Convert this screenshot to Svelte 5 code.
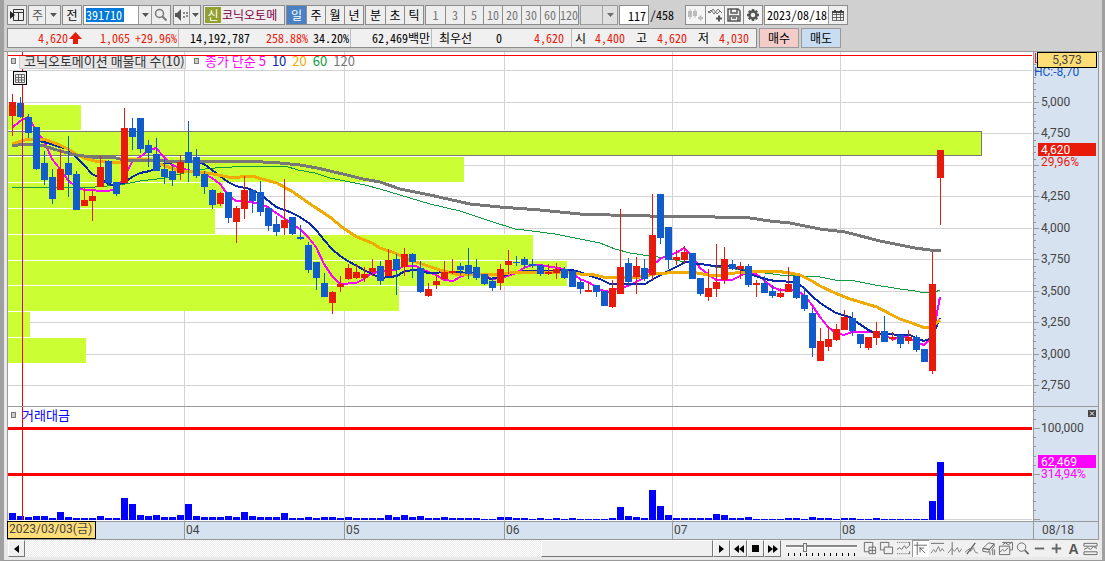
<script>
	// one row per day: direction, high, body top, body bottom, low
	const candles = `r 94 102 116 136,b 97 103 117 118,b 114 117 133 138,b 127 127 169 170,b 151 163 180 185,b 169 177 199 204,
r 149 169 190 190,b 136 163 175 197,b 171 174 210 210,r 188 200 206 206,r 189 196 201 221,r 156 167 187 187,b 160 161 183 185,
b 182 182 194 196,r 108 128 183 183,b 118 128 137 150,b 118 118 149 153,b 140 145 153 167,b 138 154 171 171,b 159 169 177 184,
b 165 171 180 186,r 155 162 173 180,b 121 152 163 182,b 149 157 176 178,b 171 174 187 194,b 189 190 205 209,r 192 193 204 206,
b 192 192 218 223,r 206 208 222 243,r 176 190 209 219,b 190 190 201 213,b 181 192 212 216,b 206 208 226 231,b 216 224 232 236,
r 179 220 228 235,b 217 217 234 235,b 225 237 239 240,b 242 245 270 273,b 262 262 278 290,b 273 283 297 297,r 291 292 303 314,
r 276 284 287 292,r 264 268 279 280,r 264 272 278 279,r 267 274 278 282,r 259 268 272 276,b 261 266 281 285,r 249 260 276 276,
b 254 259 270 295,r 248 254 267 276,b 253 254 262 278,b 261 268 292 293,r 283 289 296 297,r 275 281 285 289,r 261 272 279 280,
r 259 271 273 274,b 263 266 270 275,b 248 265 274 279,b 259 267 278 280,b 274 274 284 285,b 278 281 288 291,r 264 269 283 290,
r 250 261 265 274,b 256 262 263 266,b 257 259 265 269,b 259 264 266 268,b 265 265 274 276,r 264 272 274 275,r 263 269 273 279,
b 267 269 278 279,b 271 271 287 287,b 280 282 289 294,r 282 290 292 292,b 285 285 292 297,b 291 291 306 306,r 280 288 307 308,
r 209 267 294 294,b 258 263 282 286,r 257 266 277 294,b 259 268 279 281,r 194 235 275 280,b 194 194 238 244,b 227 227 260 269,
r 250 257 260 265,r 246 252 260 264,b 253 253 279 279,b 278 278 294 296,r 269 288 297 301,r 244 282 289 297,r 247 259 280 284,
b 260 264 269 270,r 262 266 269 279,b 264 266 285 287,r 280 283 285 297,b 276 283 293 293,b 285 291 296 298,r 288 293 297 298,
r 267 284 292 292,b 276 276 298 299,b 287 295 309 311,b 308 313 348 357,r 328 341 361 361,r 326 339 347 351,r 324 329 340 341,
r 310 317 330 330,b 312 318 331 336,b 334 334 344 348,r 337 337 348 350,r 322 331 338 345,b 316 331 342 342,r 332 337 339 341,
b 335 335 344 348,r 330 337 341 344,b 335 337 350 352,b 349 349 362 362,r 252 284 371 374,r 150 150 178 225`
		.split(',')
		.map((row, i) => {
			const [dir, high, top, bottom, low] = row.trim().split(' ');
			return { x: 12 + i * 8, dir, high: +high, top: +top, bottom: +bottom, low: +low };
		});

	const volumes = [
		7, 4, 3, 4, 4, 2, 8, 3, 2, 2, 2, 4, 2, 2, 22, 16, 5, 4, 5, 3, 3, 5, 16, 4, 3, 3, 3, 4, 3, 8,
		4, 3, 3, 3, 7, 2, 2, 3, 2, 3, 3, 2, 3, 2, 2, 2, 2, 5, 3, 5, 3, 4, 2, 2, 3, 2, 2, 2, 2, 1,
		1, 3, 3, 2, 2, 1, 2, 1, 2, 1, 2, 1, 1, 1, 1, 2, 13, 4, 3, 2, 30, 14, 5, 2, 2, 2, 2, 2, 6, 5,
		2, 2, 3, 1, 1, 1, 1, 2, 2, 1, 3, 2, 2, 1, 2, 2, 1, 1, 2, 1, 1, 1, 1, 1, 1, 19, 58
	];

	const averages = [
		{ name: 'ma60', points: '12,187 60,187 95,187 120,185 140,181 165,178 184,173 196,170 215,168 250,166 285,166 298,170 315,173 330,178 350,182 365,185 380,189 400,195 430,204 460,211 490,221 515,229 532,231 555,234 570,237 590,241 600,243 615,249 630,253 650,256 665,258 680,261 700,264 715,267 745,270 765,273 780,275 800,276 820,277 835,280 855,281 875,285 900,289 915,291 925,293 935,292 940,290' },
		{ name: 'ma5', points: '12,128 20,121 28,117 36,130 44,141 52,159 60,169 68,180 76,187 84,190 108,191 116,189 124,178 132,162 140,157 148,151 156,148 164,157 172,165 180,168 196,172 204,174 212,178 220,184 228,195 236,201 252,202 268,207 276,213 284,218 292,224 300,229 308,237 316,247 324,264 332,276 340,284 356,283 364,279 372,273 388,271 396,270 404,266 416,266 424,270 436,275 444,280 453,281 460,277 468,274 484,275 492,279 500,278 508,276 516,273 524,268 532,265 540,265 552,267 564,269 572,273 580,279 590,283 600,290 610,292 620,288 628,286 636,282 644,278 652,266 660,259 668,255 676,253 684,248 692,256 700,268 708,274 716,280 732,280 740,276 748,272 756,274 764,280 772,287 780,290 796,290 804,295 812,305 820,317 828,327 836,333 844,335 852,332 875,332 884,335 892,339 908,337 916,342 924,345 932,338 937,313 940,297' },
		{ name: 'ma10', points: '12,144 28,139 44,142 60,147 68,149 76,157 84,165 92,174 100,178 108,184 113,185 124,183 132,177 140,173 150,171 157,168 165,163 180,162 190,160 204,164 212,170 220,176 228,182 236,186 250,189 258,193 265,198 276,207 290,212 300,217 310,224 317,231 324,240 332,249 340,256 348,261 364,270 380,278 390,277 397,276 403,272 412,270 420,270 428,273 450,272 475,273 490,279 500,277 512,273 525,271 545,271 572,270 580,272 590,276 600,279 610,284 645,284 655,278 668,271 680,265 685,262 700,264 715,266 730,266 740,269 752,275 765,279 775,281 796,282 804,288 812,296 820,303 836,313 850,317 858,323 870,331 878,334 910,335 918,339 924,341 932,338 940,318' },
		{ name: 'ma20', points: '12,144 28,139 44,139 60,145 70,150 76,154 84,158 95,161 107,162 118,163 132,159 150,159 160,164 180,171 200,172 213,174 228,177 240,177 252,176 262,179 277,183 293,192 313,206 330,217 343,228 357,237 372,243 380,248 395,253 403,257 413,261 425,265 440,270 455,274 475,275 500,274 520,272 560,272 580,274 590,274 603,277 620,278 640,277 655,274 680,272 697,273 715,276 735,273 750,272 775,271 790,273 800,275 812,281 820,286 835,293 850,299 877,307 890,314 900,319 912,323 925,328 932,327 940,320' },
		{ name: 'ma120', points: '12,146 24,144 32,144 44,146 60,151 76,155 92,157 116,158 124,160 165,161 200,161 263,162 280,163 300,165 317,168 330,171 347,175 363,179 380,182 400,189 430,195 470,204 500,207 540,210 580,214 610,215 650,216 695,216 715,217 750,218 770,221 790,223 800,225 820,229 845,232 880,241 900,245 915,248 930,250 941,250' }
	];

	const profile = [
		{ y: 105, right: 81 },
		{ y: 131, right: 982 },
		{ y: 157, right: 464 },
		{ y: 183, right: 223 },
		{ y: 209, right: 215 },
		{ y: 235, right: 533 },
		{ y: 261, right: 567 },
		{ y: 286, right: 399 },
		{ y: 312, right: 30 },
		{ y: 338, right: 86 }
	];

	const months = [
		{ x: 184, label: '04' },
		{ x: 344, label: '05' },
		{ x: 504, label: '06' },
		{ x: 672, label: '07' },
		{ x: 840, label: '08' }
	];

	// 4,500 has no label, the current price tag sits there
	const prices = [
		{ y: 70 },
		{ y: 102, label: '5,000' },
		{ y: 133, label: '4,750' },
		{ y: 165 },
		{ y: 196, label: '4,250' },
		{ y: 228, label: '4,000' },
		{ y: 259, label: '3,750' },
		{ y: 291, label: '3,500' },
		{ y: 322, label: '3,250' },
		{ y: 354, label: '3,000' },
		{ y: 385, label: '2,750' }
	];

	const priceTicks = Array.from({ length: 53 }, (_, i) => Math.round(64 + i * 6.3));
	const volumeTicks = Array.from({ length: 12 }, (_, i) => Math.round(410 + i * 9.1));

	const quote = [
		{ text: '4,620', cls: 'up' },
		{ arrow: true },
		{ text: '1,065', cls: 'up' },
		{ text: '+29.96%', cls: 'up line' },
		{ text: '14,192,787' },
		{ text: '258.88%', cls: 'up' },
		{ text: '34.20%', cls: 'line' },
		{ text: '62,469백만', cls: 'line' },
		{ text: '최우선' },
		{ text: '0' },
		{ text: '4,620', cls: 'up wide line' },
		{ text: '시' },
		{ text: '4,400', cls: 'up' },
		{ text: '고' },
		{ text: '4,620', cls: 'up' },
		{ text: '저' },
		{ text: '4,030', cls: 'up' }
	];

	const minutes = ['1', '3', '5', '10', '20', '30', '60', '120'];

	let period = $state('일');
	let code = $state('391710');
	let position = $state('117');
	let date = $state('2023/08/18');
	let speed = $state(3);
</script>

{#snippet caret()}
	<svg width="7" height="4" viewBox="0 0 7 4"><path d="M0 0h7L3.500 4z" fill="#555" /></svg>
{/snippet}

<div class="window">
	<div class="toolbar">
		<button class="tool" aria-label="패널">
			<svg width="14" height="14" viewBox="0 0 14 14">
				<path d="M3.500 1.500h10v11h-10zM3.500 4.500h10M8.500 4v9" fill="none" stroke="#333" />
				<path d="M0 3l5 4-5 4z" fill="#222" />
			</svg>
		</button>
		<label class="combo kind">
			<select aria-label="구분"><option>주</option></select>
			<i>{@render caret()}</i>
		</label>
		<button class="tool">전</button>
		<div class="combo code">
			<div class="field"><input aria-label="종목코드" bind:value={code} /></div>
			<button aria-label="목록">{@render caret()}</button>
			<button class="find" aria-label="검색">
				<svg width="14" height="14" viewBox="0 0 14 14" fill="none" stroke="#777">
					<circle cx="5.500" cy="5.500" r="4" stroke-width="1.500" /><path d="M8.500 8.500l4 4" stroke-width="2" />
				</svg>
			</button>
		</div>
		<div class="combo sound">
			<button class="speaker" aria-label="소리">
				<svg width="14" height="12" viewBox="0 0 14 12" fill="#555">
					<path d="M0 4h2l4-4v12L2 8H0z" /><path d="M8 3h2v2H8zM8 7h2v2H8zM11 3h2v2h-2zM11 6h2v2h-2z" fill="#888" />
				</svg>
			</button>
			<button aria-label="소리 설정">{@render caret()}</button>
		</div>
		<div class="stock"><b>신</b><span>코닉오토메</span></div>
		<div class="group">
			{#each ['일', '주', '월', '년'] as p}
				<button class:active={period === p} onclick={() => (period = p)}>{p}</button>
			{/each}
		</div>
		<div class="group">
			{#each ['분', '초', '틱'] as p}
				<button class:active={period === p} onclick={() => (period = p)}>{p}</button>
			{/each}
		</div>
		<div class="group minutes">
			{#each minutes as m}
				<button>{m}</button>
			{/each}
		</div>
		<label class="combo blank">
			<select aria-label="주기" disabled><option></option></select>
			<i>{@render caret()}</i>
		</label>
		<div class="position">
			<input aria-label="봉 개수" bind:value={position} /><span>/458</span>
		</div>
		<div class="group icons">
			<button aria-label="봉 추가">
				<svg width="15" height="14" viewBox="0 0 15 14" fill="#bbb">
					<path d="M0 3h4v6H0zM1.500 1h1v10h-1zM5 3h4v5H5zM6.500 1h1v9h-1zM10 9h5v2h-5zM11.500 7.500h2v5h-2z" />
				</svg>
			</button>
			<button aria-label="지표 추가">
				<svg width="15" height="14" viewBox="0 0 15 14" fill="none" stroke="#555">
					<path d="M0 5l3-3 3 4 4-5 4 4M0 3l2 2 3-4 4 5 3-3" stroke-width=".8" /><path d="M8 10.500h6M11 7.500v6" stroke-width="2" />
				</svg>
			</button>
			<button aria-label="저장">
				<svg width="14" height="14" viewBox="0 0 14 14" fill="none" stroke="#555" stroke-width="1.500">
					<path d="M1 1h10l2 2v10H1zM4 1v4h6V1M3 13V8h8v5M5 10h4" />
				</svg>
			</button>
			<button aria-label="설정">
				<svg width="14" height="14" viewBox="0 0 14 14" fill="none" stroke="#555">
					<circle cx="7" cy="7" r="3.500" stroke-width="2.500" />
					<path d="M7 1v2M7 11v2M1 7h2M11 7h2M2.800 2.800l1.400 1.400M9.800 9.800l1.400 1.400M2.800 11.200l1.400-1.400M9.800 4.200l1.400-1.400" stroke-width="2.500" />
				</svg>
			</button>
		</div>
		<div class="combo date">
			<div class="field"><input aria-label="날짜" bind:value={date} /></div>
			<button class="find" aria-label="달력">
				<svg width="12" height="11" viewBox="0 0 12 11" fill="none" stroke="#444">
					<path d="M.5 1.500h11v9H.5zM.5 4.500h11M.5 7.500h11M4.500 3v7M8.500 3v7" stroke-width=".8" /><path d="M0 2h12M3 0v2M9 0v2" stroke-width="2" />
				</svg>
			</button>
		</div>
	</div>

	<div class="quotes">
		<div class="quote">
			{#each quote as q}
				<span class={q.cls}>
					{#if q.arrow}
						<svg width="13" height="12" viewBox="0 0 13 12"><path d="M6.500 0L13 7H9v5H4V7H0z" fill="#e81a0a" /></svg>
					{:else}
						{q.text}
					{/if}
				</span>
			{/each}
		</div>
		<button class="buy">매수</button>
		<button class="sell">매도</button>
	</div>

	<main class="chart">
		<div class="plot price">
			<svg viewBox="8 52 1025 354" preserveAspectRatio="none" shape-rendering="crispEdges">
				{#each months as m}
					<rect class="grid" x={m.x} y="52" width="1" height="354" />
				{/each}
				{#each prices as p}
					<rect class="grid" x="8" y={p.y} width="1024" height="1" />
				{/each}
				{#each profile as p}
					<rect fill="#fff" x="8" y={p.y - 1} width={p.right - 8} height="26" />
					<rect fill="#ccff33" x="8" y={p.y} width={p.right - 8} height="25" />
				{/each}
				<path d="M8 131.500H981.500V155.500H8" fill="none" stroke="#777" />
				{#each averages as a}
					<polyline class={a.name} points={a.points} />
				{/each}
				{#each candles as c}
					<g class={c.dir}>
						<rect x={c.x} y={c.high} width="1" height={c.low - c.high} />
						<rect x={c.x - 3} y={c.top} width="7" height={c.bottom - c.top} />
					</g>
				{/each}
				<rect x="8" y="55" width="1024" height="1" fill="#f00" />
				<rect x="22" y="52" width="1" height="354" fill="#f00" />
				<rect x="22" y="131" width="1" height="180" fill="#c0a" />
			</svg>
			<div class="legend">
				<i></i>
				<span class="title">코닉오토메이션 매물대 수(10)</span>
				<i></i>
				<span class="t5">종가 단순 5</span>
				<span class="t10">10</span>
				<span class="t20">20</span>
				<span class="t60">60</span>
				<span class="t120">120</span>
			</div>
			<button class="tablebtn" aria-label="표">
				<svg width="10" height="9" viewBox="0 0 10 9" fill="none" stroke="#666"><path d="M.5.5h9v8h-9zM.5 3.500h9M.5 6h9M3.500.5v8M6.500.5v8" /></svg>
			</button>
		</div>
		<div class="axis">
			<svg width="65" height="354" viewBox="1033 52 65 354" shape-rendering="crispEdges">
				{#each priceTicks as t}
					<rect class="tick" x="1034" y={t} width="2" height="1" />
				{/each}
				{#each prices as p}
					<rect class="tick" x="1034" y={p.y} width="5" height="1" />
					{#if p.label}<text x="1041" y={p.y + 4}>{p.label}</text>{/if}
				{/each}
				<text class="low" x="1034" y="76">HC:-8,70</text>
				<path d="M1035.500 53v9h3" stroke="#e81a0a" fill="none" />
				<rect x="1037.500" y="52.500" width="59" height="15" fill="#ffdd77" stroke="#000" />
				<text x="1067" y="64" text-anchor="middle">5,373</text>
				<text class="rate" x="1041" y="166">29,96%</text>
				<rect x="1038" y="143" width="58" height="13" fill="#e81a0a" />
				<text class="tag" x="1041" y="154">4,620</text>
			</svg>
		</div>

		<div class="plot volume">
			<svg viewBox="8 407 1025 114" preserveAspectRatio="none" shape-rendering="crispEdges">
				{#each months as m}
					<rect class="grid" x={m.x} y="407" width="1" height="114" />
				{/each}
				<rect class="grid" x="8" y="519" width="1024" height="1" />
				<rect x="8" y="427" width="1024" height="3" fill="#f00" />
				<rect x="8" y="473" width="1024" height="3" fill="#f00" />
				{#each volumes as v, i}
					<rect x={9 + i * 8} y={520 - v} width="7" height={v} fill="#00f" />
				{/each}
				<rect x="22" y="407" width="1" height="113" fill="#f00" />
			</svg>
			<div class="legend">
				<i></i>
				<span class="money">거래대금</span>
			</div>
		</div>
		<div class="axis volume">
			<svg width="65" height="114" viewBox="1033 407 65 114" shape-rendering="crispEdges">
				{#each volumeTicks as t}
					<rect class="tick" x="1034" y={t} width="2" height="1" />
				{/each}
				{#each [428, 474, 519] as t}
					<rect class="tick" x="1034" y={t} width="6" height="1" />
				{/each}
				<text x="1041" y="432">100,000</text>
				<rect x="1038" y="455" width="58" height="13" fill="#f0f" />
				<text class="tag" x="1041" y="466">62,469</text>
				<text class="share" x="1041" y="478">314,94%</text>
				<rect x="1088" y="410" width="8" height="7" fill="#444" />
				<path d="M1090 411.500l4 4M1094 411.500l-4 4" stroke="#fff" shape-rendering="auto" />
			</svg>
		</div>

		<div class="days">
			{#each months as m}
				<span style:left="{((m.x - 8) / 1025) * 100}%">{m.label}</span>
			{/each}
			<strong>2023/03/03(금)</strong>
		</div>
		<div class="today">08/18</div>
	</main>

	<div class="bottom">
		<button aria-label="왼쪽으로"><svg width="5" height="8" viewBox="0 0 5 8"><path d="M5 0v8L0 4z" /></svg></button>
		<div class="track"><div class="thumb"></div></div>
		<button aria-label="재생"><svg width="5" height="8" viewBox="0 0 5 8"><path d="M0 0v8l5-4z" /></svg></button>
		<button aria-label="뒤로"><svg width="10" height="8" viewBox="0 0 10 8"><path d="M5 0v8L0 4zM10 0v8L5 4z" /></svg></button>
		<button aria-label="정지"><svg width="7" height="7" viewBox="0 0 7 7"><path d="M0 0h7v7H0z" /></svg></button>
		<button aria-label="앞으로"><svg width="10" height="8" viewBox="0 0 10 8"><path d="M0 0v8l5-4zM5 0v8l5-4z" /></svg></button>
		<div class="slider">
			<input type="range" min="0" max="12" aria-label="속도" bind:value={speed} />
			<div class="ticks"></div>
		</div>
		<div class="draw">
			<button aria-label="창 추가"><svg viewBox="0 0 16 16"><path d="M2.500 1.500h9v10h-9z" /><path d="M7.500 6.500h7v7h-7zM7.500 10h7M11 6.500v7" class="fill" /></svg></button>
			<button aria-label="창 겹치기"><svg viewBox="0 0 16 16"><path d="M1.500 1.500h9v8h-9z" /><path d="M5.500 6.500h9v7h-9z" class="fill" /></svg></button>
			<button aria-label="구간"><svg viewBox="0 0 16 16"><path d="M1 1.500h14M1 13.500h14" stroke-dasharray="1 1" /><path d="M1 9l3-2 2 2 3-4 2 3 3-3M14.500 1v4M14.500 11v3" /></svg></button>
			<button class="active" aria-label="십자선"><svg viewBox="0 0 16 16"><path d="M1 4.500h14M4.500 1v14M7 7l6 6M7.500 7v5M7 7.500h5" /></svg></button>
			<button aria-label="가로선"><svg viewBox="0 0 16 16"><path d="M1 2.500h14" /><path d="M1 13l3-4 2 3 3-6 2 5 2-3 2 3" stroke-width=".8" /></svg></button>
			<button aria-label="세로선"><svg viewBox="0 0 16 16"><path d="M5.500 1v14" /><path d="M1 13l4-5 3 3 3-4 2 5 3-4" stroke-width=".8" /></svg></button>
			<button aria-label="추세선"><svg viewBox="0 0 16 16"><path d="M3 14L12 2" stroke-width="1.500" /><path d="M1 12l5-4 1 3 3-4 2 5 3 1" stroke-width=".8" /></svg></button>
			<button aria-label="지우기"><svg viewBox="0 0 16 16"><path d="M2 8l6-6 6 1-5 6zM2 8v3l6 1 1-3 5-6v3l-3 4M2 8l7 1M9.500 11v4M12.500 9v6M14.500 9v6" /></svg></button>
			<button aria-label="복사"><svg viewBox="0 0 16 16"><path d="M4.500 1.500h11v8h-3M5 4l3-2 3 2 3-2" /><path d="M1.500 5.500h11v9h-11z" class="fill" /><path d="M2 12l3-3 2 2 4-4" /></svg></button>
			<button aria-label="확대"><svg viewBox="0 0 16 16"><circle cx="7" cy="6.500" r="4.500" /><path d="M10.500 10l4 4" stroke-width="2" /></svg></button>
			<button aria-label="축소"><svg viewBox="0 0 16 16"><path d="M3 8h10" stroke-width="2" /></svg></button>
			<button aria-label="늘리기"><svg viewBox="0 0 16 16"><path d="M3 8h10M8 3v10" stroke-width="2" /></svg></button>
			<button class="letter">A</button>
			<button aria-label="목록"><svg viewBox="0 0 16 16"><path d="M1 2.500h14v3H1zM1 11.500h14v3H1z" /><path d="M1 9l4-2 3 2 3-3 4 2" /></svg></button>
		</div>
	</div>
</div>

<style>
	:global(body) {
		background: #a0a0a0;
	}
	.window {
		box-sizing: border-box;
		background: #d0d0d0;
		border-left: 4px solid #a0a0a0;
		border-right: 3px solid #a0a0a0;
		border-bottom: 1px solid #999;
		font-family: "Noto Sans Mono CJK KR", "Noto Sans CJK KR", sans-serif;
		font-size: 12px;
		line-height: 16px;
		color: #000;
	}
	svg {
		display: block;
		flex: none;
	}
	button, input, select {
		box-sizing: border-box;
		margin: 0;
		padding: 0;
		border: 0;
		border-radius: 0;
		background: none;
		color: inherit;
		font: inherit;
		outline: 0;
	}
	button {
		display: flex;
		align-items: center;
		justify-content: center;
	}

	/* toolbar */
	.toolbar {
		display: flex;
		gap: 1px;
		padding: 5px 0 3px 3px;
	}
	.toolbar > * {
		box-sizing: border-box;
		flex: none;
		height: 20px;
	}
	.tool, .combo, .group, .stock {
		border: 1px solid #8c8c8c;
		background: #eee;
	}
	.tool {
		width: 20px;
	}
	.combo {
		display: flex;
		position: relative;
	}
	.combo select {
		appearance: none;
		width: 100%;
		padding-left: 3px;
		color: #555;
	}
	.combo i {
		position: absolute;
		right: 0;
		top: 0;
		bottom: 0;
		display: flex;
		align-items: center;
		justify-content: center;
		width: 14px;
		border-left: 1px solid #999;
		pointer-events: none;
	}
	.combo button {
		width: 13px;
		border-left: 1px solid #999;
	}
	.combo .find {
		width: 19px;
	}
	.combo .speaker {
		width: 18px;
		border-left: 0;
	}
	.kind {
		width: 33px;
	}
	.code {
		width: 88px;
		margin-right: 1px;
	}
	.field {
		flex: 1;
		display: flex;
		align-items: center;
		background: #fff;
		padding-left: 2px;
	}
	.field input {
		width: 100%;
		height: 14px;
	}
	.code input {
		width: 38px;
		background: #0078d7;
		color: #fff;
	}
	.sound {
		width: 28px;
		margin-right: 1px;
	}
	.stock {
		display: flex;
		align-items: center;
		width: 82px;
		padding: 1px;
		overflow: hidden;
		white-space: nowrap;
		color: #800040;
	}
	.stock b {
		width: 16px;
		margin-right: 1px;
		background: #92a030;
		color: #fff;
		font-weight: 400;
		text-align: center;
	}
	.group {
		display: flex;
	}
	.group button {
		width: 19px;
		border-left: 1px solid #8c8c8c;
	}
	.group button:first-child {
		border-left: 0;
	}
	.group .active {
		background: #4b80c4;
		color: #fff;
	}
	.minutes button {
		color: #777;
	}
	.blank {
		width: 38px;
		background: #e4e4e4;
		opacity: .8;
	}
	.position {
		display: flex;
		align-items: center;
		gap: 1px;
		width: 65px;
	}
	.position input {
		width: 30px;
		height: 20px;
		padding-right: 2px;
		border: 1px solid #8c8c8c;
		background: #fff;
		text-align: right;
	}
	.icons {
		background: #f4f4f4;
	}
	.date {
		width: 84px;
	}

	/* quote line */
	.quotes {
		display: flex;
		gap: 2px;
		padding: 0 0 3px 3px;
		border-bottom: 1px solid #999;
	}
	.quote {
		box-sizing: border-box;
		display: grid;
		grid-template-columns: 60px 14px 48px 49px 71px 58px 43px 81px 40px 30px 70px 14px 39px 22px 40px 22px 40px;
		width: 750px;
		height: 20px;
		border: 1px solid #8c8c8c;
		background: #f0f0f0;
	}
	.quote span {
		display: flex;
		align-items: center;
		justify-content: flex-end;
		white-space: nowrap;
	}
	.quote .up {
		color: #e81a0a;
	}
	.quote .line {
		padding-right: 1px;
		border-right: 1px solid #bbb;
	}
	.quote .wide {
		padding-right: 7px;
	}
	.quotes button {
		width: 40px;
		height: 20px;
		border: 1px solid #999;
	}
	.buy {
		background: #f5cdc8;
	}
	.sell {
		background: #c8dcf2;
	}

	/* chart */
	.chart {
		display: grid;
		grid-template-columns: 1fr 66px;
		border: solid #e8e8e8;
		border-width: 0 3px;
		font-family: Roboto, "Noto Sans CJK KR", sans-serif;
	}
	.plot {
		position: relative;
		background: #fff;
		border-left: 1px solid #999;
		overflow: hidden;
	}
	.plot > svg {
		width: 100%;
		height: 354px;
	}
	.plot.volume > svg {
		height: 114px;
	}
	.volume {
		border-top: 1px solid #999;
	}
	.axis {
		background: #d7e2f0;
		box-shadow: inset 1px 0 #999;
		border-right: 1px solid #999;
	}
	.grid {
		fill: #d3d3d3;
	}
	.tick {
		fill: #999;
	}
	text {
		font-size: 12px;
		fill: #444;
	}
	.low {
		fill: #125bcb;
	}
	.rate {
		fill: #e81a0a;
	}
	.share {
		fill: #f0f;
	}
	.tag {
		fill: #fff;
	}
	polyline {
		fill: none;
	}
	.ma5 {
		stroke: #f0f;
		stroke-width: 2;
	}
	.ma10 {
		stroke: #0a28aa;
		stroke-width: 2;
	}
	.ma20 {
		stroke: #f0aa00;
		stroke-width: 3;
	}
	.ma60 {
		stroke: #109c40;
	}
	.ma120 {
		stroke: #777;
		stroke-width: 3;
	}
	.r {
		fill: #e81a0a;
	}
	.b {
		fill: #125bcb;
	}
	.legend {
		position: absolute;
		left: 3px;
		top: 1px;
		display: flex;
		align-items: center;
		gap: 6px;
		font-family: "Noto Sans CJK KR", sans-serif;
		font-size: 13px;
		line-height: 14px;
		white-space: nowrap;
	}
	.price .legend {
		clip-path: inset(3px 0 0 0);
	}
	.legend i {
		width: 3px;
		height: 4px;
		border: 1px solid #777;
		background: #ccc;
	}
	.legend span + i {
		margin-left: 2px;
	}
	.title {
		width: 160px;
		padding: 0 1px 0 4px;
		margin-left: -3px;
		border: 1px solid #ccc;
		background: #e8e8e8;
		color: #333;
	}
	.t5 { color: #f0f; }
	.t10 { color: #0a28aa; }
	.t20 { color: #f0aa00; }
	.t60 { color: #109c40; }
	.t120 { color: #777; }
	.money {
		color: #00f;
	}
	.tablebtn {
		position: absolute;
		left: 5px;
		top: 19px;
		width: 14px;
		height: 14px;
		border: 1px solid #000;
		background: #eee;
	}
	.days, .today {
		height: 17px;
		border: solid #999;
		border-width: 1px 0 1px 1px;
		background: #d7e2f0;
		color: #444;
	}
	.days {
		position: relative;
	}
	.days span {
		position: absolute;
		top: 0;
		height: 17px;
		padding-left: 1px;
		border-left: 1px solid #999;
	}
	.days strong {
		position: absolute;
		left: -1px;
		top: -1px;
		height: 16px;
		padding: 0 3px 0 1px;
		border: 1px solid #000;
		background: #ffdd77;
		font-weight: 400;
		line-height: 14px;
	}
	.today {
		padding-left: 8px;
		border-right-width: 1px;
		box-sizing: border-box;
		height: 19px;
	}

	/* scroll bar and drawing tools */
	.bottom {
		display: flex;
		height: 17px;
		border: solid #e8e8e8;
		border-width: 0 3px 3px 4px;
		background: #f0f0f0;
	}
	.bottom > button, .thumb {
		box-sizing: border-box;
		width: 17px;
		height: 17px;
		border: 1px solid;
		border-color: #fff #777 #777 #fff;
		background: #f0f0f0;
	}
	.track {
		flex: 1;
		display: flex;
		justify-content: flex-end;
		background: repeating-conic-gradient(#fff 0 25%, #ebebeb 0 50%) 0 0 / 2px 2px;
	}
	.thumb {
		width: 25%;
		min-width: 30px;
	}
	.slider {
		width: 80px;
		padding: 3px 4px 0 5px;
		box-sizing: border-box;
	}
	.slider input {
		appearance: none;
		display: block;
		width: 100%;
		height: 8px;
		background: linear-gradient(#888 0 2px, #fff 2px 3px, transparent 3px) 0 2px no-repeat;
	}
	.slider input::-webkit-slider-thumb {
		appearance: none;
		width: 4px;
		height: 9px;
		border: 1px solid #777;
		background: #eee;
	}
	.ticks {
		height: 3px;
		margin: 2px 1px 0 2px;
		background: repeating-linear-gradient(90deg, #000 0 1px, transparent 1px 6px);
	}
	.draw {
		display: flex;
	}
	.draw button {
		width: 17px;
		height: 17px;
	}
	.draw svg {
		width: 15px;
		height: 15px;
		fill: none;
		stroke: #666;
	}
	.draw .fill {
		fill: #f0f0f0;
	}
	.draw .active {
		background: #fff;
		box-shadow: inset 1px 1px #999;
	}
	.draw .letter {
		font-family: "Liberation Sans", sans-serif;
		font-size: 14px;
		font-weight: 700;
		color: #555;
	}
</style>
